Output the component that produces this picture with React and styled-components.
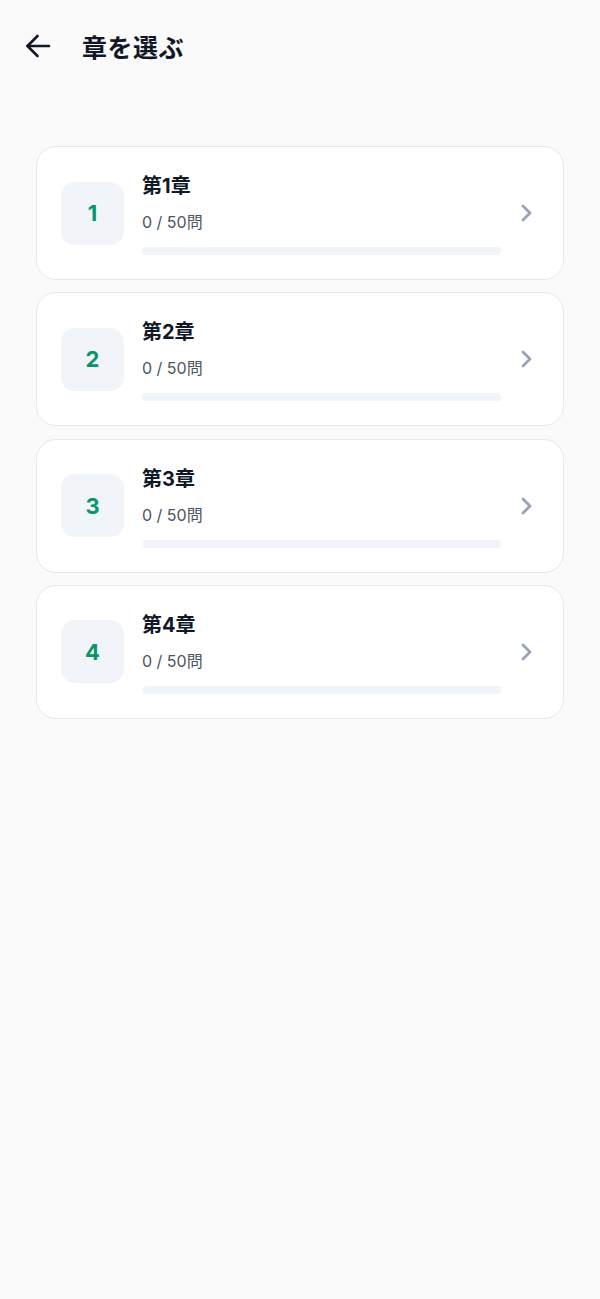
import React from 'react'
import styled, { createGlobalStyle } from 'styled-components'

const GlobalStyle = createGlobalStyle`
    body {
        margin : 0;
        background : #fafafa;
        font-family : Inter, "Noto Sans CJK JP", sans-serif;
    }
`

const Page = styled.div`
    min-height : 1299px;
    background : #fafafa;
`

const Header = styled.header`
    height : 92px;
    display : flex;
    align-items : center;
    padding : 0 24px;
    gap : 30px;
`

const BackButton = styled.button`
    width : 28px;
    height : 28px;
    padding : 0;
    border : none;
    background : none;
    display : flex;
    align-items : center;
    justify-content : center;
    color : #111827;
    cursor : pointer;
`

const Title = styled.h1`
    margin : 0;
    font-size : 25px;
    font-weight : 700;
    color : #111827;
    letter-spacing : 0.5px;
`

const List = styled.div`
    display : flex;
    flex-direction : column;
    gap : 12.3px;
    padding : 54px 36px 0;
`

const Card = styled.div`
    display : flex;
    align-items : center;
    padding : 24px 24px;
    background : #ffffff;
    border : 1px solid #e5e7eb;
    border-radius : 20px;
    cursor : pointer;
`

const Badge = styled.div`
    width : 63px;
    height : 63px;
    flex-shrink : 0;
    border-radius : 14px;
    background : #f1f5f9;
    display : flex;
    align-items : center;
    justify-content : center;
    font-size : 22px;
    font-weight : 700;
    color : #059669;
`

const Info = styled.div`
    flex : 1;
    margin-left : 18px;
    display : flex;
    flex-direction : column;
`

const ChapterName = styled.div`
    font-size : 20px;
    font-weight : 700;
    line-height : 30px;
    color : #111827;
`

const Count = styled.div`
    margin-top : 9px;
    font-size : 16px;
    line-height : 24px;
    color : #4b5563;
`

const Track = styled.div`
    margin-top : 13px;
    width : 359px;
    height : 8px;
    border-radius : 4px;
    background : #f1f5f9;
    overflow : hidden;
`

const Fill = styled.div`
    height : 100%;
    background : #059669;
`

const Chevron = styled.div`
    display : flex;
    align-items : center;
    color : #94a3b8;
    margin-right : 1px;
`

const chapters = [
    { id : 1, done : 0, total : 50 },
    { id : 2, done : 0, total : 50 },
    { id : 3, done : 0, total : 50 },
    { id : 4, done : 0, total : 50 },
]

const App = () => {
    return (
        <Page>
            <GlobalStyle />
            <Header>
                <BackButton aria-label='戻る'>
                    <svg width='26' height='24' viewBox='0 0 26 24' fill='none' stroke='currentColor' strokeWidth='2.6' strokeLinecap='round' strokeLinejoin='round'>
                        <path d='M24 12H2.5' />
                        <path d='M12.5 2L2.5 12l10 10' />
                    </svg>
                </BackButton>
                <Title>章を選ぶ</Title>
            </Header>

            <List>
                {chapters.map((c) => (
                    <Card key={c.id}>
                        <Badge>{c.id}</Badge>
                        <Info>
                            <ChapterName>第{c.id}章</ChapterName>
                            <Count>{c.done} / {c.total}問</Count>
                            <Track>
                                <Fill style={{ width : `${(c.done / c.total) * 100}%` }} />
                            </Track>
                        </Info>
                        <Chevron>
                            <svg width='24' height='24' viewBox='0 0 24 24' fill='none' stroke='currentColor' strokeWidth='2.8' strokeLinecap='round' strokeLinejoin='round'>
                                <path d='M9 5l7 7-7 7' />
                            </svg>
                        </Chevron>
                    </Card>
                ))}
            </List>
        </Page>
    )
}

export default App
